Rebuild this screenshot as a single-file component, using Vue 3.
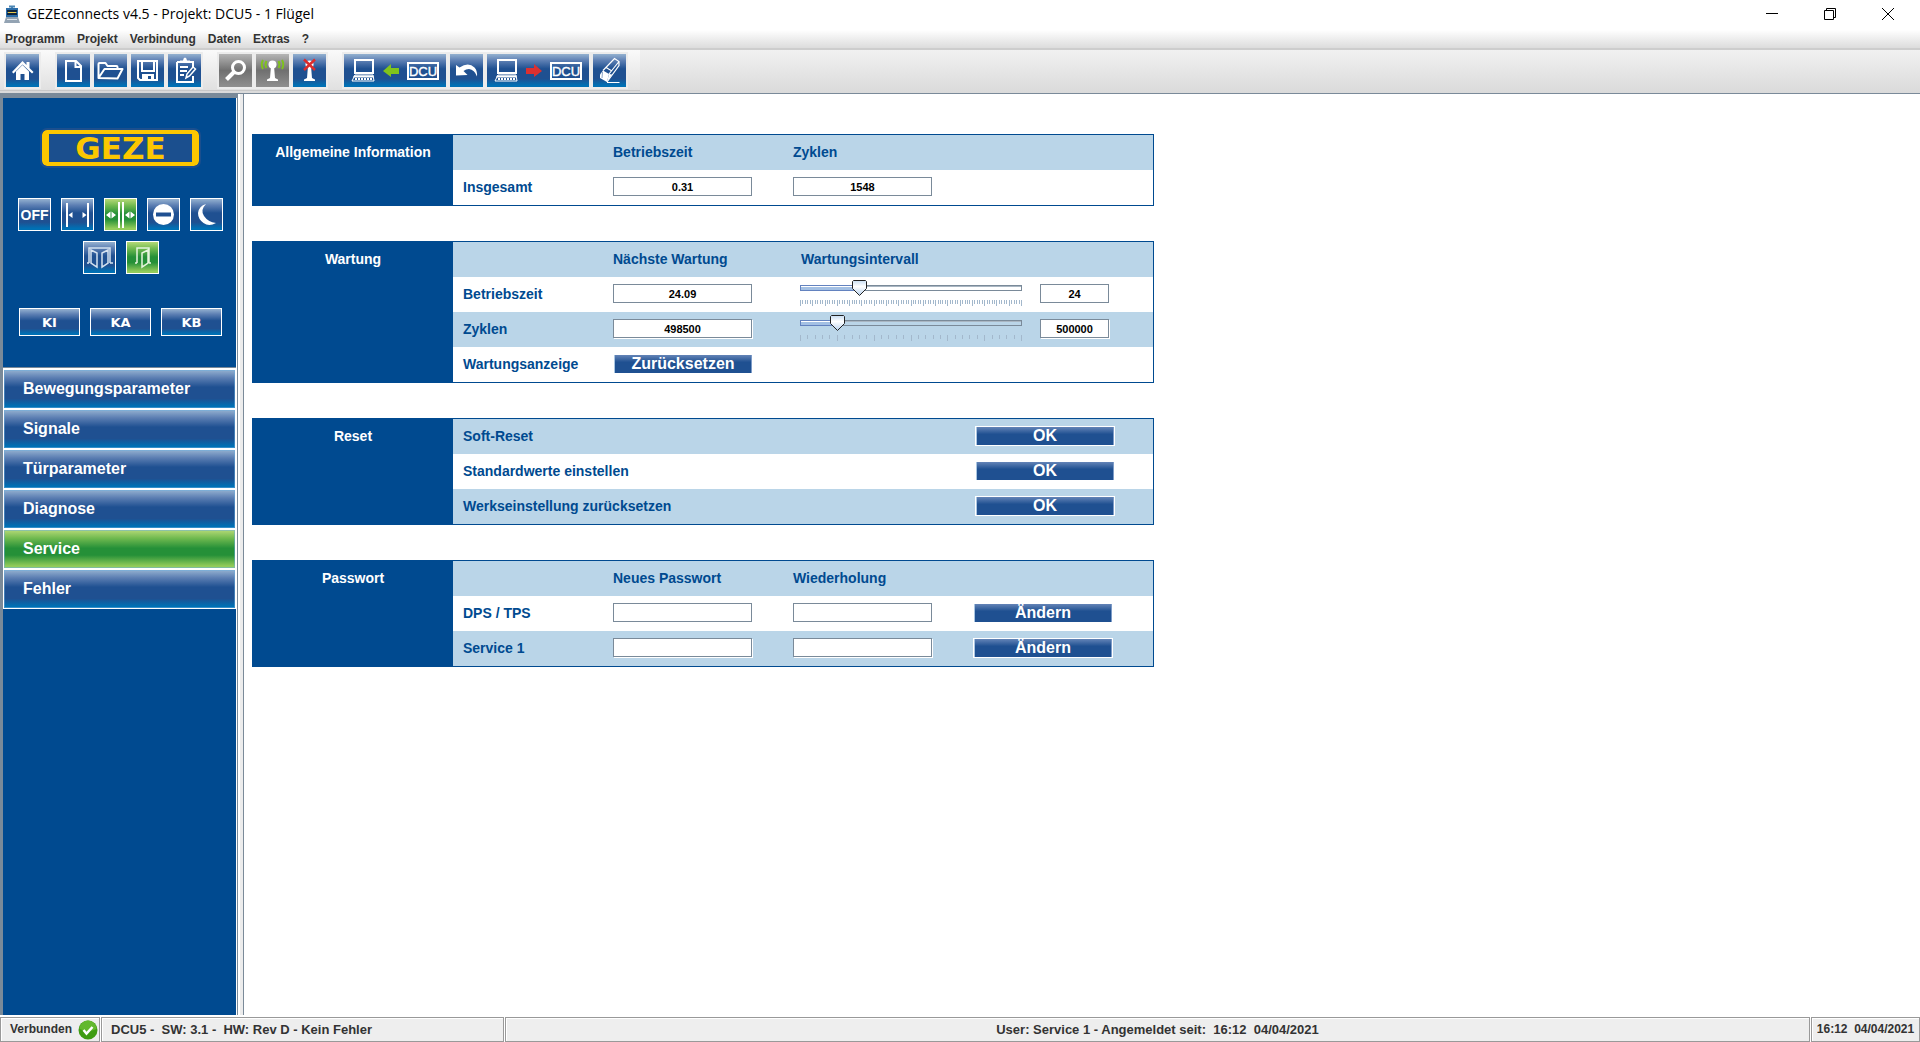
<script setup>
import { ref } from 'vue'

const menus = ['Programm', 'Projekt', 'Verbindung', 'Daten', 'Extras', '?']

const laptop =
  '<g fill="none" stroke="#fff" stroke-width="2"><rect x="11" y="6" width="18" height="13"/><path d="M11 21h18l1 6H8z" stroke-width="1"/></g><path d="M10 21.500h19l1 2H9z" fill="#fff"/><path d="M11 25h17" stroke="#fff" stroke-width="2" stroke-dasharray="2 1"/>'
const dcuBox =
  '<rect x="64" y="9" width="30" height="16" fill="none" stroke="#fff" stroke-width="2"/><text x="79" y="22" text-anchor="middle" fill="#fff" stroke="#fff" stroke-width=".4" font-family="Liberation Sans, sans-serif" font-size="13">DCU</text>'

const toolGroups = [
  [
    {
      id: 'Start', w: 33,
      art: '<path d="M6 18 16.500 7l4 4V8h3v6l4 4-1.500 1.500L16.500 10.500 7.500 19.500z" fill="#fff"/><path d="M16.500 11 23 17.500V26h-4.500v-6h-4v6H10v-8.500z" fill="#fff"/>',
    },
  ],
  [
    {
      id: 'Neu', w: 33,
      art: '<path d="M9 7h10l5 5v15H9zM18.500 7v6H24" fill="none" stroke="#fff" stroke-width="2"/>',
    },
    {
      id: 'Öffnen', w: 33,
      art: '<path d="M4.500 24V10q0-1 1-1h6l2 3h9q1 0 1 1v2M4.500 24l6-9h18l-5 9.500z" fill="none" stroke="#fff" stroke-width="2" stroke-linejoin="round"/>',
    },
    {
      id: 'Speichern', w: 33,
      art: '<path d="M7 7h19v19H9l-2-2z" fill="none" stroke="#fff" stroke-width="2"/><path d="M11 7v10h12V7" fill="none" stroke="#fff" stroke-width="2"/><path d="M11 26v-6h12v6h-3v-4h-3v4z" fill="#fff"/>',
    },
    {
      id: 'Protokoll', w: 33,
      art: '<path d="M9 8h16v5M25 22v6H9V8" fill="none" stroke="#fff" stroke-width="2"/><path d="M12 8.500h10v-2h-3q-.5-3-2-3t-2 3h-3z" fill="#fff"/><path d="M12 13h8M12 17h7M12 21h4" stroke="#fff" stroke-width="2"/><path d="m18 24 1-4 6-7 2.500 2-6 7z" fill="#1f5091" stroke="#fff" stroke-width="1.500"/>',
    },
  ],
  [
    {
      id: 'Suchen', w: 33, off: true,
      art: '<circle cx="19.500" cy="13.500" r="6" fill="none" stroke="#fff" stroke-width="3"/><path d="m15 18-7.500 7.500" stroke="#fff" stroke-width="4"/>',
    },
    {
      id: 'Verbinden', w: 33, off: true,
      art: '<circle cx="16.500" cy="10.500" r="4" fill="#fff"/><path d="M15 12h3l1 12 3 1.500V27H11v-1.500l3-1.500z" fill="#fff"/><path d="M10.500 7q-2 3.500 0 7M7 6q-2.500 4.500 0 9M22.500 7q2 3.500 0 7M26 6q2.500 4.500 0 9" fill="none" stroke="#7fc31c" stroke-width="2"/>',
    },
    {
      id: 'Trennen', w: 33,
      art: '<circle cx="16.500" cy="10.500" r="4" fill="#fff"/><path d="M15 12h3l1 12 3 1.500V27H11v-1.500l3-1.500z" fill="#fff"/><path d="m11 5.500 11 10.500M22 5.500 11 16" stroke="#dc2c2c" stroke-width="2.500"/>',
    },
  ],
  [
    {
      id: 'Aus DCU lesen', w: 102,
      art: laptop + '<path d="m39 17 8-7v4h8v6h-8v3z" fill="#80c31c"/>' + dcuBox,
    },
    {
      id: 'Rückgängig', w: 33,
      art: '<path d="m6 11 3.500 2.500q9-6 15 0 3 3 2.500 9-2.500-7-8-7.500-3 0-5.500 2l4 4L6 21.500z" fill="#fff"/>',
    },
    {
      id: 'In DCU schreiben', w: 102,
      art: laptop + '<path d="m55 17-8-7v4h-8v6h8v3z" fill="#dc3030"/>' + dcuBox,
    },
    {
      id: 'Löschen', w: 33,
      art: '<path d="m10 16.500 6 3.500-2 8-7-4v-3.500z" fill="#fff"/><path d="m16 20 3 .5-5 7.500z" fill="#fff"/><path d="M10 16.500 21.500 4.500 26 7.500v4L14 28M16 20 26 7.500M13 13.500l6 3.500" fill="none" stroke="#fff" stroke-width="1.200"/><path d="M14 28.500h12.500" stroke="#fff"/><path d="m9.500 18-.5 6" stroke="#8aa5c8"/>',
    },
  ],
]

const modes = [
  [
    { id: 'Aus', text: 'OFF' },
    {
      id: 'Ladenschluss',
      art: '<path d="M5 4v24M26 4v24" stroke="#fff" stroke-width="2"/><path d="m6.500 16 4-3v6zM24.500 16l-4-3v6z" fill="#fff"/>',
    },
    {
      id: 'Automatik', on: true,
      art: '<path d="M14 3v26M18 3v26" stroke="#fff" stroke-width="2"/><path d="m1 16 4.500-3.500v7zM11 16l-4.500-3.500v7zM20 16l4.500-3.500v7zM30 16l-4.500-3.500v7z" fill="#fff"/>',
    },
    {
      id: 'Daueroffen',
      art: '<circle cx="15.500" cy="15.500" r="10.500" fill="#fff"/><path d="M8 13.500h15v4H8z" fill="#1f5091"/>',
    },
    {
      id: 'Nacht',
      art: '<path d="M15 5q-6 6-2 12 4 6 12 7-7 4-12.500 0T7 14q1-7 8-9z" fill="#fff"/>',
    },
  ],
  [
    {
      id: 'Zweiflügelig',
      art: '<path d="M5 21V6h21v15M5 21H3M26 21h3M7 8l6 3v14l-6-4zM24 8l-6 3v14l6-4z" fill="none" stroke="#d5e2f0" stroke-width="1.500"/>',
    },
    {
      id: 'Einflügelig', on: true,
      art: '<path d="M10 21V6h12v15M8 21h2M22 21h2M21 8l-6 3v14l6-4z" fill="none" stroke="#e6f5dd" stroke-width="1.500"/>',
    },
  ],
]

const nav = ['Bewegungsparameter', 'Signale', 'Türparameter', 'Diagnose', 'Service', 'Fehler']
const active = ref('Service')

const makeTicks = (count) =>
  Array.from({ length: count + 1 }, (_, i) => ({
    x: Math.round((i * 221) / count),
    h: i % 5 === 0 ? 6 : 4,
  }))

const intervals = ref([
  { label: 'Betriebszeit', next: '24.09', value: '24', min: 0, max: 90, pos: 24, ticks: makeTicks(90) },
  { label: 'Zyklen', next: '498500', value: '500000', min: 0, max: 30, pos: 5, ticks: makeTicks(30) },
])
const resets = ['Soft-Reset', 'Standardwerte einstellen', 'Werkseinstellung zurücksetzen']
const accounts = ['DPS / TPS', 'Service 1']
</script>

<template>
  <div class="app">
    <header class="titlebar">
      <svg class="app-icon" viewBox="0 0 16 18" aria-hidden="true">
        <path d="M5 1.500h6M8 1v3" stroke="#4b86b4" stroke-width="2" />
        <rect x="2" y="3" width="12" height="9" fill="#2b6ca8" />
        <path d="M3 6h10M3 9h10" stroke="#10253d" stroke-width="2" />
        <path d="M4 7.500h8" stroke="#e8c84a" />
        <path d="M2 12h12l2 6H0z" fill="#93a3b3" />
        <path d="M3 14.500h10" stroke="#dde3ea" />
      </svg>
      <span class="title">GEZEconnects v4.5 - Projekt: DCU5 - 1 Flügel</span>
      <div class="window-controls">
        <button type="button" aria-label="Minimieren">
          <svg width="12" height="12" viewBox="0 0 12 12"><path d="M0 5.500h12" stroke="#000" /></svg>
        </button>
        <button type="button" aria-label="Wiederherstellen">
          <svg width="12" height="12" viewBox="0 0 12 12">
            <path d="M.5 2.500h9v9h-9zM2.500 2.500v-2h9v9h-2" fill="none" stroke="#000" />
          </svg>
        </button>
        <button type="button" aria-label="Schließen">
          <svg width="12" height="12" viewBox="0 0 12 12"><path d="m0 0 12 12M12 0 0 12" stroke="#000" /></svg>
        </button>
      </div>
    </header>

    <nav class="menubar">
      <button v-for="m in menus" :key="m" type="button">{{ m }}</button>
    </nav>

    <div class="toolbar-row">
      <div class="toolbar">
        <div v-for="(group, i) in toolGroups" :key="i" class="tool-group">
          <button
            v-for="t in group"
            :key="t.id"
            type="button"
            class="tool"
            :class="{ off: t.off }"
            :aria-label="t.id"
          >
            <svg :width="t.w" height="33" :viewBox="`0 0 ${t.w} 33`" v-html="t.art"></svg>
          </button>
        </div>
      </div>
    </div>

    <div class="body">
      <aside class="sidebar">
        <div class="status-panel">
          <div class="logo"><span>GEZE</span></div>
          <div class="modes">
            <div v-for="(row, i) in modes" :key="i" class="mode-row">
              <button
                v-for="m in row"
                :key="m.id"
                type="button"
                class="mode"
                :class="{ on: m.on }"
                :aria-label="m.id"
              >
                <template v-if="m.text">{{ m.text }}</template>
                <svg v-else width="31" height="31" viewBox="0 0 31 31" v-html="m.art"></svg>
              </button>
            </div>
          </div>
          <div class="contacts">
            <button v-for="k in ['KI', 'KA', 'KB']" :key="k" type="button" class="contact">{{ k }}</button>
          </div>
        </div>
        <nav class="nav">
          <button
            v-for="n in nav"
            :key="n"
            type="button"
            :class="{ on: n === active }"
            @click="active = n"
          >
            {{ n }}
          </button>
        </nav>
      </aside>

      <main class="content">
        <section class="panel">
          <h2>Allgemeine Information</h2>
          <table>
            <colgroup><col class="c-label" /><col class="c-field" /><col class="c-field" /><col /></colgroup>
            <tbody>
              <tr class="tint">
                <th></th>
                <th scope="col">Betriebszeit</th>
                <th scope="col">Zyklen</th>
                <td></td>
              </tr>
              <tr>
                <th scope="row">Insgesamt</th>
                <td><input class="field" type="text" value="0.31" aria-label="Betriebszeit insgesamt" /></td>
                <td><input class="field" type="text" value="1548" aria-label="Zyklen insgesamt" /></td>
                <td></td>
              </tr>
            </tbody>
          </table>
        </section>

        <section class="panel">
          <h2>Wartung</h2>
          <table>
            <colgroup><col class="c-label" /><col class="c-field" /><col class="c-slider" /><col /></colgroup>
            <tbody>
              <tr class="tint">
                <th></th>
                <th scope="col">Nächste Wartung</th>
                <th scope="col" class="indent">Wartungsintervall</th>
                <td></td>
              </tr>
              <tr v-for="(r, i) in intervals" :key="r.label" :class="{ tint: i === 1 }">
                <th scope="row">{{ r.label }}</th>
                <td><input v-model="r.next" class="field" type="text" :aria-label="`Nächste Wartung ${r.label}`" /></td>
                <td class="slider-cell">
                  <div class="slider-stack">
                    <span class="groove"><span :style="{ width: `${(r.pos / r.max) * 100}%` }"></span></span>
                    <input
                      v-model="r.pos"
                      type="range"
                      class="slider"
                      :min="r.min"
                      :max="r.max"
                      :aria-label="`Wartungsintervall ${r.label}`"
                    />
                  </div>
                  <svg class="ticks" width="222" height="6" viewBox="0 0 222 6" aria-hidden="true">
                    <rect v-for="(t, k) in r.ticks" :key="k" :x="t.x" y="0" width="1" :height="t.h" />
                  </svg>
                </td>
                <td><input v-model="r.value" class="field small" type="text" :aria-label="`Intervall ${r.label}`" /></td>
              </tr>
              <tr>
                <th scope="row">Wartungsanzeige</th>
                <td><button type="button" class="action">Zurücksetzen</button></td>
                <td></td>
                <td></td>
              </tr>
            </tbody>
          </table>
        </section>

        <section class="panel">
          <h2>Reset</h2>
          <table>
            <colgroup><col class="c-wide" /><col /></colgroup>
            <tbody>
              <tr v-for="(r, i) in resets" :key="r" :class="{ tint: i !== 1 }">
                <th scope="row">{{ r }}</th>
                <td><button type="button" class="action">OK</button></td>
              </tr>
            </tbody>
          </table>
        </section>

        <section class="panel">
          <h2>Passwort</h2>
          <table>
            <colgroup><col class="c-label" /><col class="c-field" /><col class="c-field" /><col /></colgroup>
            <tbody>
              <tr class="tint">
                <th></th>
                <th scope="col">Neues Passwort</th>
                <th scope="col">Wiederholung</th>
                <td></td>
              </tr>
              <tr v-for="(a, i) in accounts" :key="a" :class="{ tint: i === 1 }">
                <th scope="row">{{ a }}</th>
                <td><input class="field" type="password" :aria-label="`Neues Passwort ${a}`" /></td>
                <td><input class="field" type="password" :aria-label="`Wiederholung ${a}`" /></td>
                <td><button type="button" class="action">Ändern</button></td>
              </tr>
            </tbody>
          </table>
        </section>
      </main>
    </div>

    <footer class="statusbar">
      <div class="cell link-state">
        <span>Verbunden</span>
        <svg width="20" height="20" viewBox="0 0 20 20" aria-hidden="true">
          <circle cx="10" cy="10" r="9.500" fill="#3f9c12" />
          <path d="M1.500 9a8.500 8.500 0 0 1 17 0q-8 4-17 0z" fill="#62b82e" />
          <path d="m5.500 10 3 3.500 6-6.500" fill="none" stroke="#fff" stroke-width="2.500" />
        </svg>
      </div>
      <div class="cell device">DCU5 -&nbsp; SW: 3.1 -&nbsp; HW: Rev D - Kein Fehler</div>
      <div class="cell session">User: Service 1 - Angemeldet seit:&nbsp; 16:12&nbsp; 04/04/2021</div>
      <div class="cell clock">16:12&nbsp; 04/04/2021</div>
    </footer>
  </div>
</template>

<style>
body {
  margin: 0;
}
</style>

<style scoped>
.app {
  --navy: #004a90;
  --slate: #7a8a99;
  --tint: #bad5e8;
  --blue-fill: linear-gradient(#94b1d0 0%, #5d7fb3 20%, #1f5091 45%, #1f5091 75%, #0070b4 95%);
  --green-fill: linear-gradient(#b4d977 0%, #6fb94f 22%, #259038 48%, #259038 66%, #93cc5a 95%);
  display: flex;
  flex-direction: column;
  min-height: 100vh;
  background: #fff;
  font-family: "Liberation Sans", Arial, sans-serif;
}
button {
  margin: 0;
  padding: 0;
  border: 0;
  background: none;
  font-family: inherit;
}
svg {
  display: block;
}

.titlebar {
  display: flex;
  align-items: center;
  height: 28px;
  padding: 0 3px 2px 4px;
}
.app-icon {
  width: 16px;
  height: 18px;
}
.title {
  flex: 1;
  margin-left: 7px;
  font: 14px/28px "Open Sans", "Noto Sans", sans-serif;
}
.window-controls {
  display: flex;
}
.window-controls button {
  display: grid;
  place-items: center;
  width: 58px;
  height: 28px;
}

.menubar {
  display: flex;
  gap: 12px;
  height: 18px;
  padding: 0 5px;
  border-bottom: 2px solid #cdcdcd;
  background: linear-gradient(#fff, #dcdcdc);
}
.menubar button {
  color: #333;
  font-size: 12px;
  font-weight: bold;
  line-height: 16px;
}

.toolbar-row {
  height: 43px;
  border-bottom: 1px solid var(--slate);
  background: linear-gradient(#f1f1f1, #dadada);
}
.toolbar {
  display: flex;
  box-sizing: border-box;
  gap: 14px;
  width: 640px;
  height: 41px;
  padding: 2px 4px;
  border-bottom: 1px solid #c8c8c8;
  background: linear-gradient(#fafafa, #e0e0e0);
}
.tool-group {
  display: flex;
}
.tool {
  height: 37px;
  border: 2px solid #ececec;
  background: var(--blue-fill) padding-box;
}
.tool.off {
  background: linear-gradient(#b5b5b5, #707070 50%, #8f8f8f) padding-box;
}

.body {
  display: flex;
  flex: 1;
}
.sidebar {
  display: flex;
  flex-direction: column;
  flex: none;
  box-sizing: border-box;
  width: 244px;
  border-right: 1px solid var(--slate);
  background: linear-gradient(90deg, var(--slate) 3px, var(--navy) 3px 236px, #fff 236px 237px, var(--slate) 237px 238px, #fff 238px 240px, #ececec 240px);
}
.status-panel {
  display: flex;
  flex-direction: column;
  align-items: center;
  box-sizing: border-box;
  width: 238px;
  height: 273px;
  padding: 32px 0 0 3px;
  border-top: 4px solid var(--slate);
}
.logo {
  display: grid;
  place-items: center;
  box-sizing: border-box;
  width: 157px;
  height: 36px;
  overflow: hidden;
  border: 7px solid #fcc700;
  border-width: 4px 7px;
  border-radius: 5px;
  outline: 2px solid #1b4f8e;
  background: #1b4f8e;
}
.logo span {
  color: #fcc700;
  font: bold 31px/28px "DejaVu Sans", sans-serif;
}
.modes {
  display: flex;
  flex-direction: column;
  gap: 10px;
  margin-top: 32px;
}
.mode-row {
  display: flex;
  justify-content: center;
  gap: 10px;
}
.mode {
  box-sizing: border-box;
  width: 33px;
  height: 33px;
  border: 1px solid #fff;
  background: var(--blue-fill);
  color: #fff;
  font-size: 14px;
  font-weight: bold;
}
.mode.on {
  background: var(--green-fill);
}
.contacts {
  display: flex;
  gap: 10px;
  margin-top: 34px;
}
.contact {
  width: 61px;
  height: 28px;
  border: 1px solid #fff;
  background: var(--blue-fill);
  color: #fff;
  font: bold 13px "DejaVu Sans", sans-serif;
}
.nav {
  display: flex;
  flex-direction: column;
  gap: 2px;
  width: 231px;
  margin-left: 3px;
  padding: 3px 1px 1px;
  background: #fff;
  box-shadow: inset 0 1px var(--slate);
}
.nav button {
  height: 38px;
  padding: 0 0 1px 19px;
  background: var(--blue-fill);
  box-shadow: inset 0 0 0 1px #6aaede80;
  color: #fff;
  font-size: 16px;
  font-weight: bold;
  text-align: left;
}
.nav button.on {
  background: var(--green-fill);
}

.content {
  display: flex;
  flex: 1;
  flex-direction: column;
  gap: 35px;
  padding: 40px 8px;
}
.panel {
  display: flex;
  box-sizing: border-box;
  width: 100%;
  max-width: 902px;
  border: 1px solid var(--navy);
}
.panel h2 {
  box-sizing: border-box;
  flex: none;
  width: 200px;
  margin: 0;
  padding-top: 7px;
  background: var(--navy);
  color: #fff;
  font-size: 14px;
  line-height: 20px;
  text-align: center;
}
table {
  flex: 1;
  border-collapse: collapse;
  table-layout: fixed;
  color: var(--navy);
  font-size: 14px;
  line-height: 20px;
}
.c-label {
  width: 160px;
}
.c-field {
  width: 180px;
}
.c-slider {
  width: 247px;
}
.c-wide {
  width: 522px;
}
.tint {
  background: var(--tint);
}
th,
td {
  height: 28px;
  padding: 7px 0 0;
  text-align: left;
  vertical-align: top;
}
th:first-child {
  padding-left: 10px;
}
.indent {
  padding-left: 8px;
}
.field {
  display: block;
  box-sizing: border-box;
  width: 139px;
  height: 19px;
  padding: 0;
  border: 1px solid var(--slate);
  background: #fff;
  box-shadow: 1px 1px #fff;
  color: #000;
  font: bold 11px "Liberation Sans", Arial, sans-serif;
  text-align: center;
}
.small {
  width: 69px;
}
.action {
  display: block;
  width: 140px;
  height: 20px;
  border: 1px solid #fff;
  background: linear-gradient(#6484b7, #1f5091 40%) padding-box;
  box-shadow: inset 1px 0 #a9c6e2, inset -1px 0 #7d9cc8;
  color: #fff;
  font-size: 16px;
  font-weight: bold;
  line-height: 18px;
}
.slider-cell {
  padding-top: 3px;
}
.slider-stack {
  display: grid;
  align-items: center;
  width: 237px;
  height: 16px;
}
.groove {
  grid-area: 1 / 1;
  box-sizing: border-box;
  height: 6px;
  margin: 0 8px 0 7px;
  border: 1px solid var(--slate);
  box-shadow: inset 0 1px #a9b6c2;
}
.groove span {
  display: block;
  height: 4px;
  background: linear-gradient(#fff 1px, #a3c0e4 1px);
  box-shadow: 0 0 0 1px #6382bf;
}
.slider {
  grid-area: 1 / 1;
  width: 237px;
  height: 16px;
  margin: 0;
  appearance: none;
  background: none;
}
.slider::-webkit-slider-thumb {
  width: 15px;
  height: 16px;
  appearance: none;
  background: url("data:image/svg+xml,%3Csvg xmlns='http://www.w3.org/2000/svg' viewBox='0 0 15 16'%3E%3Cdefs%3E%3ClinearGradient id='g' x2='0' y2='1'%3E%3Cstop stop-color='%23c8ddf2'/%3E%3Cstop offset='.4' stop-color='%23fff'/%3E%3Cstop offset='1' stop-color='%23b8d2ee'/%3E%3C/linearGradient%3E%3C/defs%3E%3Cpath d='M1.500 .5h12l1 1v7l-7 7-7-7v-7z' fill='url(%23g)' stroke='%23222'/%3E%3C/svg%3E");
}
.ticks {
  margin: 4px 0 0 7px;
  fill: #a3b8cc;
}

.statusbar {
  display: flex;
  gap: 1px;
  margin-top: 2px;
  color: #333;
  font-size: 13px;
  font-weight: bold;
  line-height: 23px;
}
.cell {
  box-sizing: border-box;
  height: 25px;
  border: 1px solid #999;
  background: #eee;
  box-shadow: inset 1px 1px #fff;
}
.link-state {
  display: flex;
  align-items: center;
  gap: 6px;
  width: 100px;
  padding-left: 9px;
  font-size: 12px;
}
.device {
  width: 403px;
  padding-left: 9px;
}
.session {
  flex: 1;
  text-align: center;
}
.clock {
  width: 109px;
  font-size: 12px;
  text-align: center;
}
</style>
